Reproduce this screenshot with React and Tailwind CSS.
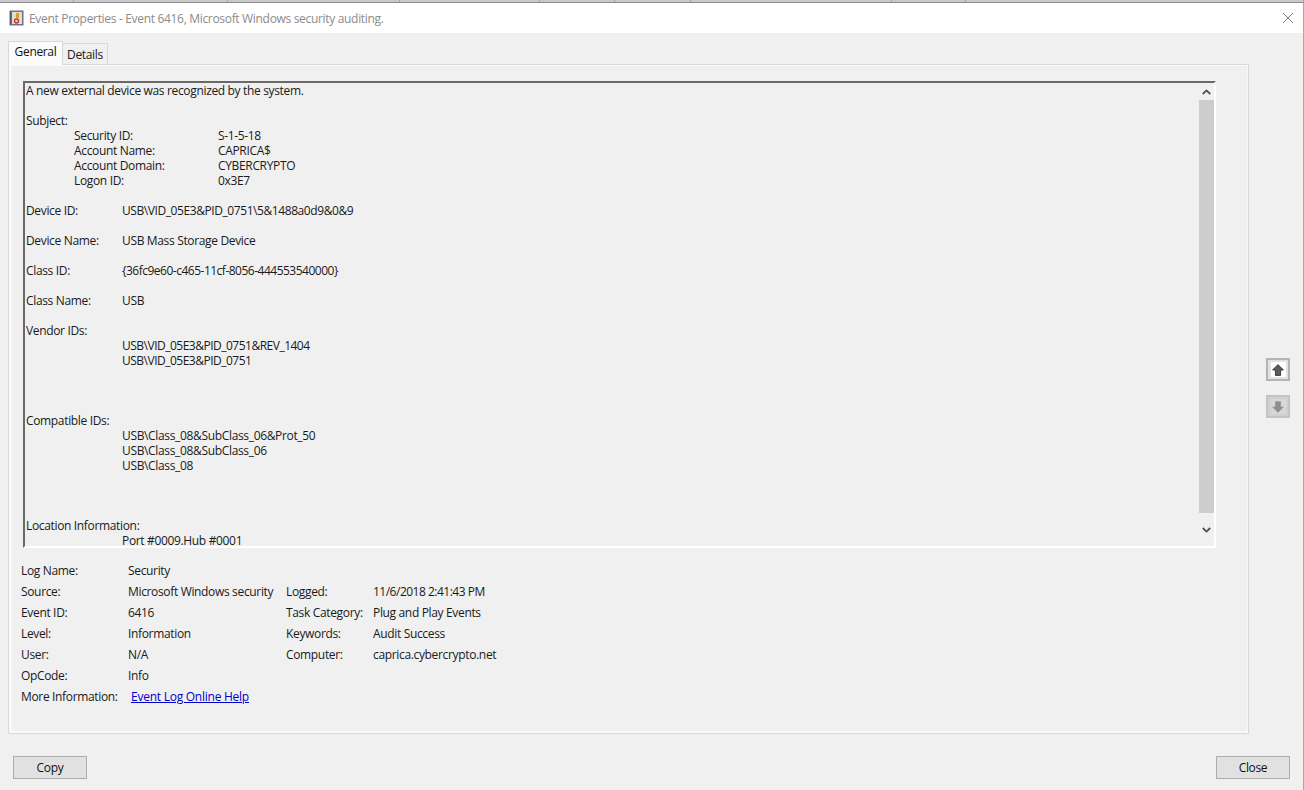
import React from 'react';

const font = { fontFamily: '"Open Sans", "Noto Sans", sans-serif' };

const lines = [
  ['A new external device was recognized by the system.'],
  [],
  ['Subject:'],
  ['', 'Security ID:', 'S-1-5-18'],
  ['', 'Account Name:', 'CAPRICA$'],
  ['', 'Account Domain:', 'CYBERCRYPTO'],
  ['', 'Logon ID:', '0x3E7'],
  [],
  ['Device ID:', 'USB\\VID_05E3&PID_0751\\5&1488a0d9&0&9', null],
  [],
  ['Device Name:', 'USB Mass Storage Device', null],
  [],
  ['Class ID:', '{36fc9e60-c465-11cf-8056-444553540000}', null],
  [],
  ['Class Name:', 'USB', null],
  [],
  ['Vendor IDs:'],
  ['', 'USB\\VID_05E3&PID_0751&REV_1404', null],
  ['', 'USB\\VID_05E3&PID_0751', null],
  [],
  [],
  [],
  ['Compatible IDs:'],
  ['', 'USB\\Class_08&SubClass_06&Prot_50', null],
  ['', 'USB\\Class_08&SubClass_06', null],
  ['', 'USB\\Class_08', null],
  [],
  [],
  [],
  ['Location Information:'],
  ['', 'Port #0009.Hub #0001', null],
];

const details = [
  ['Log Name:', 'Security', '', ''],
  ['Source:', 'Microsoft Windows security', 'Logged:', '11/6/2018 2:41:43 PM'],
  ['Event ID:', '6416', 'Task Category:', 'Plug and Play Events'],
  ['Level:', 'Information', 'Keywords:', 'Audit Success'],
  ['User:', 'N/A', 'Computer:', 'caprica.cybercrypto.net'],
  ['OpCode:', 'Info', '', ''],
];

// digit-heavy values run wider in Open Sans than in the original font
const tight = (v) => {
  if (/1488/.test(v)) return 'tracking-[-0.42px]';
  return /0751|444553|2018/.test(v) ? 'tracking-[-0.5px]' : '';
};

const Line = ({ cells }) => {
  if (cells.length === 0) return <div className="h-[15px]" />;
  if (cells.length === 1) return <div className="h-[15px] whitespace-nowrap">{cells[0]}</div>;
  if (cells[2] === null) {
    return (
      <div className="h-[15px] flex whitespace-nowrap">
        <div className="w-[96px] shrink-0">{cells[0]}</div>
        <div className={tight(cells[1])}>{cells[1]}</div>
      </div>
    );
  }
  return (
    <div className="h-[15px] flex whitespace-nowrap pl-[48px]">
      <div className="w-[144px] shrink-0">{cells[1]}</div>
      <div>{cells[2]}</div>
    </div>
  );
};

const Chevron = ({ up }) => (
  <svg width="9" height="6" viewBox="0 0 9 6" className="text-[#505050]">
    <path d={up ? 'M0.8 5L4.5 1.4L8.2 5' : 'M0.8 1L4.5 4.6L8.2 1'} fill="none" stroke="currentColor" strokeWidth="1.8" />
  </svg>
);

const ArrowButton = ({ up, disabled }) => (
  <button className={`w-[24px] h-[23px] border-2 flex items-center justify-center ${disabled ? 'border-[#c4c4c4] bg-[#d0d0d0]' : 'border-[#b4b4b4] bg-[#e2e2e2]'}`}>
    <span className={`w-[15px] h-[15px] flex items-center justify-center ${disabled ? 'bg-[#d8d8d8]' : 'bg-white'}`}>
      <svg width="12" height="12" viewBox="0 0 12 12">
        <path
          d={up ? 'M6 0.6L11.4 6H8.6V11.4H3.4V6H0.6Z' : 'M6 11.4L11.4 6H8.6V0.6H3.4V6H0.6Z'}
          fill={disabled ? '#8e8e8e' : '#5c5c5c'}
          stroke={disabled ? '#9a9a9a' : '#262626'}
          strokeWidth="0.8"
        />
      </svg>
    </span>
  </button>
);

const WinButton = ({ children }) => (
  <button className="w-[74px] h-[23px] bg-[#e1e1e1] border border-[#adadad] text-[12px] text-[#111] flex items-center justify-center">
    {children}
  </button>
);

export default function App() {
  return (
    <div style={font} className="relative w-[1304px] h-[790px] overflow-hidden bg-[#f0f0f0] text-[12px] leading-[15px] tracking-[-0.34px] text-[#1a1a1a] flex flex-col border-r border-[#a8a8a8]">
      {/* sliver of the list behind the dialog */}
      <div className="h-[3px] bg-[#c9c8ce] border-b border-[#8c8c8c] shrink-0 flex">
        <div className="w-[74px] border-r border-[#a5a5a5]" />
        <div className="w-[154px] border-r border-[#a5a5a5]" />
        <div className="w-[172px] border-r border-[#a5a5a5]" />
        <div className="w-[140px] border-r border-[#a5a5a5]" />
        <div className="w-[75px] border-r border-[#a5a5a5]" />
        <div className="w-[76px] border-r border-[#a5a5a5]" />
        <div className="w-[201px] border-r border-[#a5a5a5]" />
        <div className="w-[74px] border-r border-[#a5a5a5]" />
      </div>

      <div className="h-[30px] bg-white flex items-center shrink-0 pl-[9px] pr-[9px]">
        <svg width="15" height="16" viewBox="0 0 15 16" className="mr-[5px]">
          <rect x="1" y="1" width="13" height="14" fill="#8a8fb0" stroke="#4a4a60" strokeWidth="0.8" />
          <rect x="3" y="2" width="10" height="12" fill="#e4dfc2" />
          <path d="M1 3h2M1 5h2M1 7h2M1 9h2M1 11h2M1 13h2" stroke="#30304a" strokeWidth="0.8" />
          <rect x="7" y="3" width="3" height="5" fill="#d6a020" />
          <circle cx="7.5" cy="11" r="2" fill="none" stroke="#c03030" strokeWidth="1.3" />
        </svg>
        <span className="text-[#8b8b8b] tracking-[-0.32px]">Event Properties - Event 6416, Microsoft Windows security auditing.</span>
        <svg width="12" height="12" viewBox="0 0 12 12" className="ml-auto">
          <path d="M1 1L11 11M11 1L1 11" stroke="#7a7a7a" strokeWidth="1" fill="none" />
        </svg>
      </div>

      <div className="flex-1 flex flex-col min-h-0 pl-[8px]">
        <div className="flex items-end h-[31px] shrink-0">
          <div className="w-[55px] h-[24px] bg-[#fbfbfb] border border-b-0 border-[#d9d9d9] flex items-center justify-center relative top-[1px] z-10 text-[#111] pb-[4px]">General</div>
          <div className="w-[45px] h-[21px] bg-[#f0f0f0] border border-l-0 border-b-0 border-[#d9d9d9] flex items-center justify-center">Details</div>
        </div>

        <div className="w-[1241px] h-[670px] border border-[#d9d9d9] shrink-0">
          <div className="h-full border-t border-r border-b-2 border-l-[3px] border-[#f9f9f9] flex flex-col pt-[15px] pl-[11px] pr-[31px]">
            <div className="h-[467px] shrink-0 border-2 border-t-[#696969] border-l-[#696969] border-b-white border-r-white flex">
              <div className="flex-1 min-w-0 pl-[1px]">
                {lines.map((cells, i) => <Line key={i} cells={cells} />)}
              </div>
              <div className="w-[16px] shrink-0 flex flex-col items-center bg-[#f0f0f0]">
                <div className="h-[17px] flex items-center justify-center shrink-0"><Chevron up /></div>
                <div className="w-[15px] flex-1 bg-[#cdcdcd] mb-[1px]" />
                <div className="h-[32px] flex items-center justify-center shrink-0"><Chevron /></div>
              </div>
            </div>

            <div className="mt-[12px] -ml-[2px]">
              {details.map((row) => (
                <div key={row[0]} className="h-[21px] flex items-center whitespace-nowrap">
                  <div className="w-[107px] shrink-0">{row[0]}</div>
                  <div className="w-[158px] shrink-0">{row[1]}</div>
                  <div className="w-[87px] shrink-0">{row[2]}</div>
                  <div className={tight(row[3])}>{row[3]}</div>
                </div>
              ))}
              <div className="h-[21px] flex items-center whitespace-nowrap">
                <div className="w-[110px] shrink-0">More Information:</div>
                <a className="text-[#0000cc] underline tracking-[-0.25px]">Event Log Online Help</a>
              </div>
            </div>
          </div>
        </div>

        <div className="flex justify-between h-[23px] mt-[22px] pl-[5px] w-[1282px] shrink-0">
          <WinButton>Copy</WinButton>
          <WinButton>Close</WinButton>
        </div>
      </div>

      <div className="absolute left-[1266px] top-[358px] flex flex-col gap-[14px]">
        <ArrowButton up />
        <ArrowButton disabled />
      </div>
    </div>
  );
}
